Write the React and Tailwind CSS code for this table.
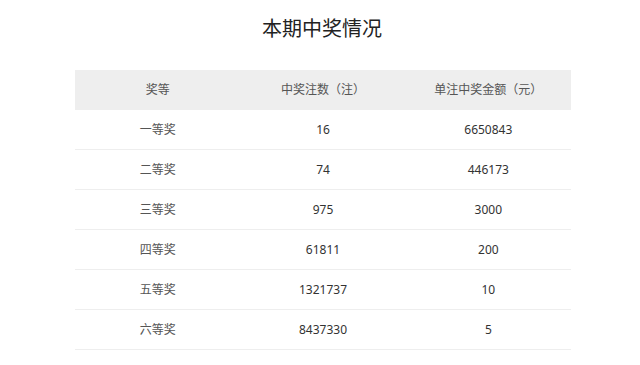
const rows = [
  ['一等奖', '16', '6650843'],
  ['二等奖', '74', '446173'],
  ['三等奖', '975', '3000'],
  ['四等奖', '61811', '200'],
  ['五等奖', '1321737', '10'],
  ['六等奖', '8437330', '5'],
]

export default function App() {
  return (
    <div className="h-[365px] w-[640px] bg-white font-['Noto_Sans','Noto_Sans_CJK_SC',sans-serif] text-[#333]">
      <h1 className="flex h-[70px] items-start justify-center pt-[15px] pl-[4px] text-[20px] leading-[28px] font-normal text-[#222]">
        本期中奖情况
      </h1>
      <div className="ml-[75px] w-[496px]">
        <div className="grid h-10 grid-cols-3 items-center bg-[#eeeeee] text-center text-[12px] text-[#555]">
          <div>奖等</div>
          <div>中奖注数（注）</div>
          <div>单注中奖金额（元）</div>
        </div>
        {rows.map(([level, count, amount]) => (
          <div key={level} className="grid h-10 grid-cols-3 items-center border-b border-[#eeeeee] text-center text-[12px]">
            <div className="text-[#555]">{level}</div>
            <div>{count}</div>
            <div>{amount}</div>
          </div>
        ))}
      </div>
    </div>
  )
}
